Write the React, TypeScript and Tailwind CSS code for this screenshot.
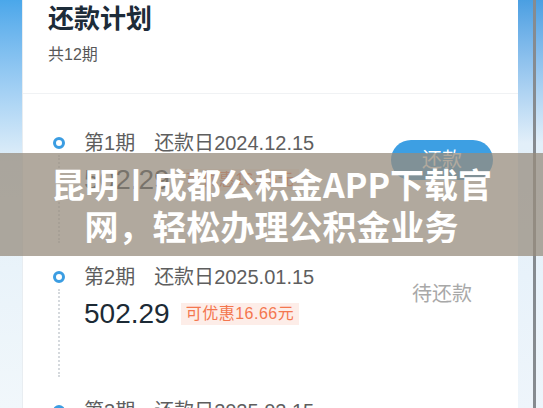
import React from 'react';

interface Period {
    index: number;
    date: string;
    amount: string;
    discount: string;
    due: boolean;
}

const periods: Period[] = [
    { index: 1, date: '2024.12.15', amount: '502.29', discount: '16.66', due: true },
    { index: 2, date: '2025.01.15', amount: '502.29', discount: '16.66', due: false },
    { index: 3, date: '2025.02.15', amount: '502.29', discount: '16.66', due: false },
];

const font = "font-['Liberation_Sans','Noto_Sans_CJK_SC',sans-serif]";

const PeriodRow: React.FC<{ period: Period }> = ({ period }) => (
    <div className="flex h-[134px] shrink-0">
        {/* Timeline */}
        <div className="w-[12px] flex flex-col items-center">
            <div className="mt-[6px] w-[12px] h-[12px] rounded-full border-[3px] border-[#3b9de2] bg-white" />
            <div className="mt-[6px] h-[88px] border-l-2 border-dotted border-[#d5d9dd]" />
        </div>

        {/* Details */}
        <div className="ml-[19px] flex-1">
            <div className="h-[24px] flex items-center text-[20px] text-[#5e5e5e]">
                <span>第{period.index}期</span>
                <span className="ml-[19px]">还款日{period.date}</span>
            </div>
            <div className="mt-[8px] flex items-center">
                <span className="text-[28px] leading-[34px] text-[#1c2a35]">{period.amount}</span>
                <span className="ml-[11px] h-[22px] px-[5px] flex items-center bg-[#fdede8] text-[#f4774f] text-[16px] tracking-[0.5px]">
                    可优惠{period.discount}元
                </span>
            </div>
        </div>

        {/* Action */}
        <div className="w-[102px] mt-[9px] h-[40px] flex items-center justify-center">
            {period.due ? (
                <div className="w-full h-full rounded-full bg-[#3d9fe3] text-white text-[20px] flex items-center justify-center">
                    还款
                </div>
            ) : (
                <span className="text-[20px] text-[#a8a8a8]">待还款</span>
            )}
        </div>
    </div>
);

export default function App() {
    return (
        <div className={`relative w-[543px] h-[408px] overflow-hidden flex bg-white ${font}`}>
            {/* Left page edge */}
            <div className="w-[22px] shrink-0 bg-linear-to-b from-[#4aa7ea] via-[#e3f0f9] via-40% to-[#f1f7fb]" />

            {/* Card */}
            <div className="flex-1 flex flex-col bg-white border-l border-[#e8edf1]">
                <div className="h-[94px] shrink-0 pl-[25px] pt-[2px] border-b border-[#f0f2f4]">
                    <div className="text-[26px] leading-[34px] font-bold text-[#1d2c39]">还款计划</div>
                    <div className="mt-[9px] text-[16px] leading-[20px] text-[#585858]">共12期</div>
                </div>

                <div className="pt-[37px] pl-[30px] pr-[25px] flex flex-col">
                    {periods.map((p) => (
                        <PeriodRow key={p.index} period={p} />
                    ))}
                </div>
            </div>

            {/* Right page edge */}
            <div className="w-[15px] shrink-0 bg-linear-to-b from-[#4a9fe2] via-[#e2eff9] via-35% to-[#eef5fb]" />
            <div className="w-[3px] shrink-0 bg-[#868b90]" />
            <div className="w-[7px] shrink-0 bg-linear-to-b from-[#4a9fe2] via-[#e2eff9] via-35% to-[#eef5fb]" />

            {/* Caption overlay */}
            <div className="absolute left-0 right-0 top-[153px] h-[103px] bg-[#978c7e]/75 pt-[10px] text-center text-white font-bold text-[34px] leading-[42px] font-['Noto_Sans_CJK_SC',sans-serif]">
                <div>昆明丨成都公积金APP下载官</div>
                <div>网，轻松办理公积金业务</div>
            </div>
        </div>
    );
}
